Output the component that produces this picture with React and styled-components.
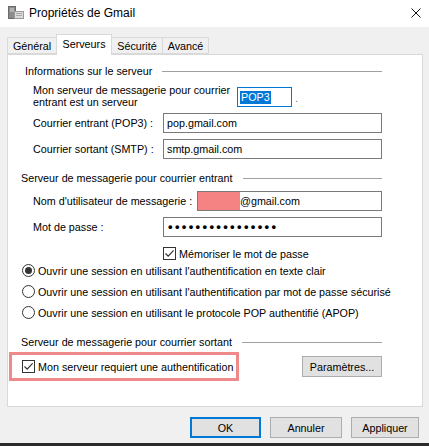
import React from 'react';
import styled, { createGlobalStyle } from 'styled-components';

const Global = createGlobalStyle`
  html, body { margin: 0; padding: 0; background: #f0f0f0; }
  body {
    font-family: "Liberation Sans", Arial, sans-serif;
    font-size: 10.75px;
    color: #000;
  }
  * { box-sizing: border-box; }
`;

const Window = styled.div`
  width: 429px;
  height: 446px;
  display: flex;
  flex-direction: column;
  background: #f0f0f0;
  overflow: hidden;
`;

const TitleBar = styled.div`
  height: 27px;
  flex-shrink: 0;
  background: #fff;
  display: flex;
  align-items: center;
  padding: 0 8px 2px 8px;
`;

const TitleText = styled.div`
  flex: 1;
  margin-left: 5px;
  font-size: 12px;
`;

const Body = styled.div`
  flex: 1;
  display: flex;
  flex-direction: column;
  padding: 7px 0 0 7px;
`;

const TabStrip = styled.div`
  height: 21px;
  margin-bottom: -1px;
  display: flex;
  align-items: flex-end;
  position: relative;
  z-index: 1;
`;

const Tab = styled.div`
  width: ${(p) => p.$w}px;
  height: ${(p) => (p.$active ? 21 : 17)}px;
  margin-bottom: ${(p) => (p.$active ? 0 : 1)}px;
  margin-left: ${(p) => (p.$first ? 0 : -1)}px;
  border: 1px solid #d9d9d9;
  border-bottom: ${(p) => (p.$active ? 'none' : '1px solid #d9d9d9')};
  background: ${(p) => (p.$active ? '#fff' : '#f0f0f0')};
  position: relative;
  z-index: ${(p) => (p.$active ? 2 : 1)};
  display: flex;
  align-items: center;
  justify-content: center;
  padding-bottom: ${(p) => (p.$active ? 2 : 0)}px;
`;

const Panel = styled.div`
  width: 416px;
  height: 353px;
  background: #fff;
  border: 1px solid #d9d9d9;
  display: flex;
  flex-direction: column;
  padding: 0 40px 0 0;
`;

const GroupHeader = styled.div`
  height: 14px;
  margin-top: ${(p) => p.$mt}px;
  padding-left: ${(p) => p.$pl}px;
  display: flex;
  align-items: center;
  gap: 10px;
  white-space: nowrap;
  &::after {
    content: '';
    flex: 1;
    height: 1px;
    background: #a0a0a0;
  }
`;

const FieldRow = styled.div`
  display: flex;
  align-items: ${(p) => (p.$top ? 'flex-start' : 'center')};
  margin-top: ${(p) => p.$mt}px;
  min-height: 20px;
`;

const Label = styled.div`
  width: ${(p) => p.$w}px;
  padding-left: 25px;
  line-height: 12px;
  white-space: nowrap;
  flex-shrink: 0;
`;

const TextBox = styled.div`
  flex: ${(p) => (p.$w ? '0 0 auto' : 1)};
  width: ${(p) => (p.$w ? `${p.$w}px` : 'auto')};
  height: 20px;
  margin-top: ${(p) => p.$mt || 0}px;
  border: 1px solid ${(p) => (p.$focus ? '#0078d7' : '#7a7a7a')};
  background: #fff;
  display: flex;
  align-items: center;
  padding-left: ${(p) => (p.$pl != null ? p.$pl : 3)}px;
  white-space: nowrap;
  overflow: hidden;
`;

const Selected = styled.span`
  background: #0078d7;
  color: #fff;
  height: 13px;
  line-height: 13px;
  padding: 0 1px;
`;

const Masked = styled.span`
  width: 42px;
  height: 18px;
  background: #f58383;
  flex-shrink: 0;
`;

const Trail = styled.span`
  color: #777;
  margin: 8px 0 0 3px;
`;

const Dots = styled.span`
  font-size: 13px;
  font-weight: bold;
  letter-spacing: 2.35px;
  line-height: 18px;
  padding-left: 1px;
`;

const CheckRow = styled.div`
  display: flex;
  align-items: center;
  gap: 3px;
  height: ${(p) => p.$h}px;
  margin-top: ${(p) => p.$mt || 0}px;
  padding-left: ${(p) => p.$pl}px;
  white-space: nowrap;
`;

const Box = styled.span`
  width: 13px;
  height: 13px;
  border: 1px solid #333;
  background: #fff;
  flex-shrink: 0;
  display: flex;
  align-items: center;
  justify-content: center;
`;

const Radio = styled.span`
  width: 13px;
  height: 13px;
  border: 1px solid #333;
  border-radius: 50%;
  background: #fff;
  flex-shrink: 0;
  display: flex;
  align-items: center;
  justify-content: center;
  &::after {
    content: '';
    width: 7px;
    height: 7px;
    border-radius: 50%;
    background: ${(p) => (p.$on ? '#333' : 'transparent')};
  }
`;

const AuthRow = styled.div`
  display: flex;
  align-items: center;
  margin-top: 3px;
  height: 29px;
`;

const Highlight = styled.div`
  width: 230px;
  height: 29px;
  margin-left: 1px;
  border: 3px solid #f08a8a;
  display: flex;
  align-items: center;
  gap: 3px;
  padding-left: 10px;
  white-space: nowrap;
`;

const Button = styled.div`
  width: ${(p) => p.$w}px;
  height: 21px;
  margin-left: ${(p) => (p.$auto ? 'auto' : 0)};
  background: #e1e1e1;
  border: ${(p) => (p.$default ? '2px solid #0078d7' : '1px solid #adadad')};
  display: flex;
  align-items: center;
  justify-content: center;
  white-space: nowrap;
`;

const ButtonBar = styled.div`
  display: flex;
  justify-content: flex-end;
  gap: 9px;
  margin-top: 10px;
  padding-right: 10px;
`;

const BottomEdge = styled.div`
  margin-top: auto;
  height: 3px;
  background: #2b2b2b;
  margin-left: -7px;
`;

const Check = () => (
  <svg width="11" height="11" viewBox="0 0 11 11">
    <path d="M1.5 5.5 L4.2 8.2 L9.6 2.4" fill="none" stroke="#333" strokeWidth="1.2" />
  </svg>
);

const AppIcon = () => (
  <svg width="16" height="15" viewBox="0 0 16 15">
    <rect x="0.5" y="1.5" width="7" height="12" fill="#8c8c8c" stroke="#6a6a6a" />
    <rect x="2" y="3.5" width="4" height="1" fill="#d6d6d6" />
    <rect x="2" y="5.5" width="4" height="1" fill="#d6d6d6" />
    <rect x="6.5" y="6.5" width="9" height="7" fill="#dcdcdc" stroke="#9a9a9a" />
    <rect x="8" y="8" width="6" height="1" fill="#a8a8a8" />
    <rect x="8" y="10" width="6" height="1" fill="#a8a8a8" />
  </svg>
);

const Close = () => (
  <svg width="10" height="10" viewBox="0 0 10 10">
    <path d="M0.5 0.5 L9.5 9.5 M9.5 0.5 L0.5 9.5" stroke="#111" strokeWidth="1" />
  </svg>
);

export default function App() {
  return (
    <>
      <Global />
      <Window>
        <TitleBar>
          <AppIcon />
          <TitleText>Propriétés de Gmail</TitleText>
          <Close />
        </TitleBar>
        <Body>
          <TabStrip>
            <Tab $w={50} $first>Général</Tab>
            <Tab $w={56} $active>Serveurs</Tab>
            <Tab $w={52}>Sécurité</Tab>
            <Tab $w={47}>Avancé</Tab>
          </TabStrip>
          <Panel>
            <GroupHeader $mt={9} $pl={17}>Informations sur le serveur</GroupHeader>
            <FieldRow $mt={6} $top>
              <Label $w={229}>
                Mon serveur de messagerie pour courrier
                <br />
                entrant est un serveur
              </Label>
              <TextBox $w={55} $mt={3} $focus $pl={2}>
                <Selected>POP3</Selected>
              </TextBox>
              <Trail>.</Trail>
            </FieldRow>
            <FieldRow $mt={5}>
              <Label $w={155}>Courrier entrant (POP3) :</Label>
              <TextBox>pop.gmail.com</TextBox>
            </FieldRow>
            <FieldRow $mt={6}>
              <Label $w={155}>Courrier sortant (SMTP) :</Label>
              <TextBox>smtp.gmail.com</TextBox>
            </FieldRow>
            <GroupHeader $mt={12} $pl={13}>Serveur de messagerie pour courrier entrant</GroupHeader>
            <FieldRow $mt={6}>
              <Label $w={189}>Nom d'utilisateur de messagerie :</Label>
              <TextBox $pl={0}>
                <Masked />
                @gmail.com
              </TextBox>
            </FieldRow>
            <FieldRow $mt={6}>
              <Label $w={155}>Mot de passe :</Label>
              <TextBox>
                <Dots>••••••••••••••••</Dots>
              </TextBox>
            </FieldRow>
            <CheckRow $h={13} $mt={10} $pl={155}>
              <Box><Check /></Box>
              Mémoriser le mot de passe
            </CheckRow>
            <CheckRow $h={21} $pl={14}>
              <Radio $on />
              Ouvrir une session en utilisant l'authentification en texte clair
            </CheckRow>
            <CheckRow $h={21} $pl={14}>
              <Radio />
              Ouvrir une session en utilisant l'authentification par mot de passe sécurisé
            </CheckRow>
            <CheckRow $h={21} $pl={14}>
              <Radio />
              Ouvrir une session en utilisant le protocole POP authentifié (APOP)
            </CheckRow>
            <GroupHeader $mt={12} $pl={13}>Serveur de messagerie pour courrier sortant</GroupHeader>
            <AuthRow>
              <Highlight>
                <Box><Check /></Box>
                Mon serveur requiert une authentification
              </Highlight>
              <Button $w={80} $auto>Paramètres...</Button>
            </AuthRow>
          </Panel>
          <ButtonBar>
            <Button $w={71} $default>OK</Button>
            <Button $w={72}>Annuler</Button>
            <Button $w={68}>Appliquer</Button>
          </ButtonBar>
          <BottomEdge />
        </Body>
      </Window>
    </>
  );
}
